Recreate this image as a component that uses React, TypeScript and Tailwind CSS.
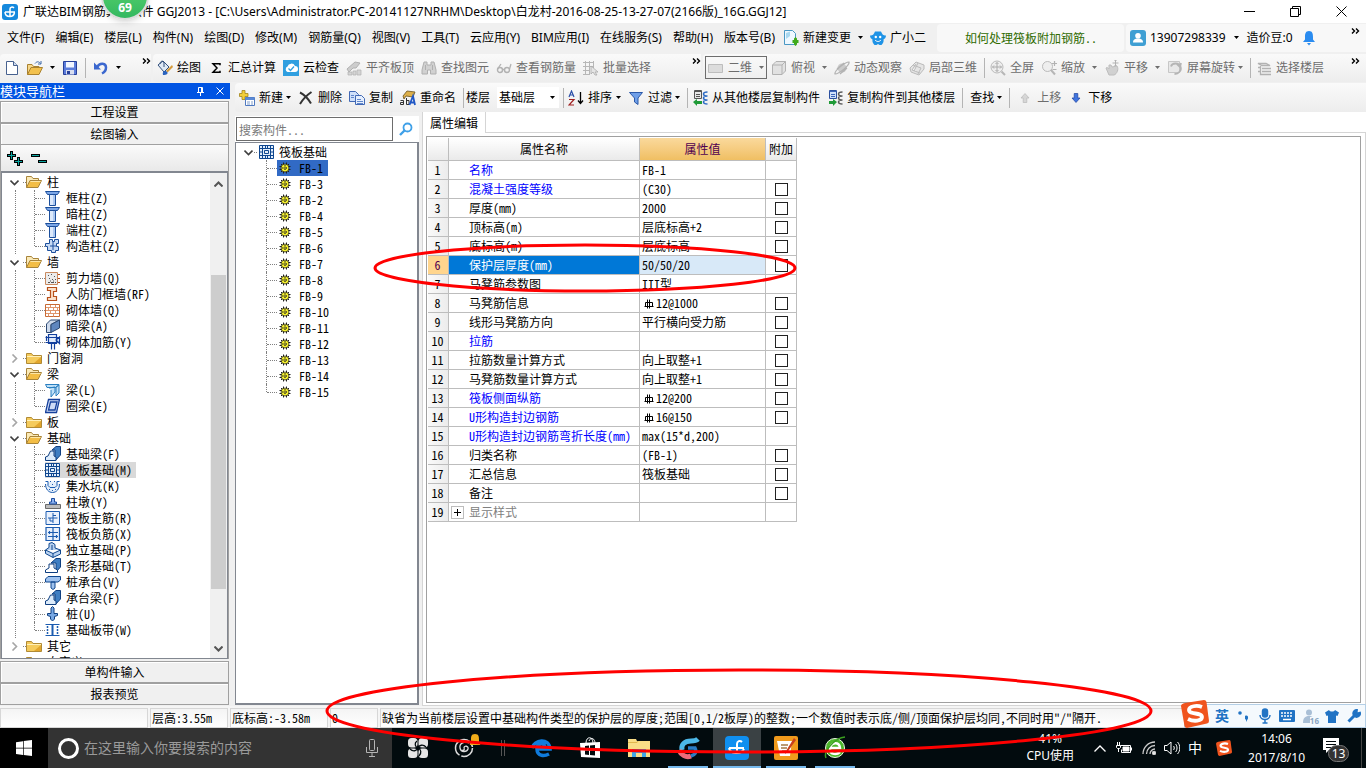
import React from "react";

const UI = "font-['Noto_Sans','Noto_Sans_CJK_SC',sans-serif]";
const SONG = "font-['Noto_Sans_Mono_CJK_SC','Noto_Sans_CJK_SC',monospace]";

type Kids = { children?: React.ReactNode };

function Ico({ children, dim = false, className = "size-4" }: Kids & { dim?: boolean; className?: string }) {
  return (
    <svg viewBox="0 0 16 16" className={`shrink-0 ${className} ${dim ? "opacity-80" : ""}`} fill="none" aria-hidden="true">
      {children}
    </svg>
  );
}

function Arrow({ dim = false }: { dim?: boolean }) {
  return (
    <svg viewBox="0 0 5 3" className="h-[3px] w-[5px] shrink-0" aria-hidden="true">
      <path d="M0 0h5L2.500 3z" fill={dim ? "#6d6d6d" : "#000"} />
    </svg>
  );
}

function More() {
  return (
    <svg viewBox="0 0 9 6" className="mt-1 h-1.5 w-[9px] shrink-0 self-start" fill="none" stroke="#000" strokeWidth="1.400" aria-hidden="true">
      <path d="M1 .5 3.500 3 1 5.500M5 .5 7.500 3 5 5.500" />
    </svg>
  );
}

function Sep() {
  return <span className="h-5 w-px shrink-0 bg-[#b4b4b4]" />;
}

/* ---------- toolbar drawings ---------- */
const I = {
  app: (
    <>
      <rect width="16" height="16" rx="3" fill="#1589dd" />
      <path d="M8 13V5c0-2 2.500-2.500 4-1M3 8h10M3 8c0 3 2 4.500 5 4.500 2 0 4-1.500 4.500-4" stroke="#fff" strokeWidth="1.500" />
    </>
  ),
  doc: (
    <>
      <path d="M2.500 1.500h7l4 4v9h-11z" fill="#fff" stroke="#47618f" />
      <path d="M9.500 1.500v4h4" fill="#cfdcf0" stroke="#47618f" />
    </>
  ),
  docPlus: (
    <>
      <path d="M1.500.5h8l3 3v11h-11z" fill="#eef8ff" stroke="#4a98c4" />
      <path d="M3 9V3l4-1.500V6z" fill="#a8d8f0" />
      <path d="M11 8.500 12.500 7 14 8.500V10h1.500v3H14v1.500L12.500 16 11 14.500V13H9.500v-3H11z" fill="#3faa1c" />
    </>
  ),
  open: (
    <>
      <path d="M.5 14.500v-10h4.500l1.500 2H12v2" fill="#f6d78a" stroke="#a9812f" />
      <path d="m.5 14.500 3.500-7h11.500l-3.500 7z" fill="#f2c14e" stroke="#a9812f" />
      <path d="M8 3.500c2-2.500 4-2 5.500 0M14 1v3h-3" stroke="#3d69a8" />
    </>
  ),
  save: (
    <>
      <path d="M1.500 1.500h13v13h-13z" fill="#5b7cdb" stroke="#27409a" />
      <path d="M4 2h8v5.500H4z" fill="#f2f6ff" />
      <path d="M4 10h8v4.500H4z" fill="#d8def0" />
      <path d="M5 11h3v3H5z" fill="#27409a" />
    </>
  ),
  undo: (
    <>
      <path d="M4 7c3-5 9-4 9 .5 0 3-2 5-4 6" stroke="#3c68cf" strokeWidth="2.500" />
      <path d="M1 2.500v7h7z" fill="#3c68cf" />
    </>
  ),
  paint: (
    <>
      <path d="m1 5 5-4 6 6-5 5z" fill="#dfe9f5" stroke="#33507c" />
      <path d="M3 4c0-3 3-4 4-1v4" stroke="#33507c" />
      <path d="m15 5-6 6 1.500 1.500L16 7z" fill="#d59a3a" />
      <path d="M6 15c-1-3 1-4.500 3-4l1.500 1.500C11 14 9 15.500 6 15z" fill="#2a63c0" />
    </>
  ),
  sigma: <path d="M12 5.200V3.700H5L9 8l-4 4.300h7v-1.500" stroke="#000" strokeWidth="1.500" />,
  cloud: (
    <>
      <rect width="16" height="16" fill="#2f9fe0" />
      <path d="M4.500 12a3 3 0 0 1 0-5.500 4 4 0 0 1 7.500-.5A3 3 0 0 1 12 12z" fill="#fff" />
      <path d="m5.500 8.500 2 2 3.500-4" stroke="#2f9fe0" strokeWidth="1.300" />
    </>
  ),
  align: (
    <>
      <path d="m1 9 8-7 5 1-4 5H7l-4 4z" fill="#c4c4c4" stroke="#a2a2a2" />
      <path d="M2 12h4v3H2zm5-1h3v4H7zm4-1h4v5h-4z" fill="#cfcfcf" stroke="#a0a0a0" strokeWidth=".7" />
    </>
  ),
  binoc: <path d="M3 2h3v3h4V2h3l2 8v4H9.500v-4h-3v4H1v-4zM4.500 5v5M11.500 5v5" fill="#c9c9c9" stroke="#a0a0a0" />,
  glasses: (
    <>
      <circle cx="4" cy="10" r="2.500" stroke="#a2a2a2" strokeWidth="1.400" />
      <circle cx="11" cy="10" r="2.500" stroke="#a2a2a2" strokeWidth="1.400" />
      <path d="M6 9.500h3M1.500 9 5 4M13.500 9l1.500-5" stroke="#a2a2a2" strokeWidth="1.300" />
    </>
  ),
  batch: (
    <>
      <path d="M0 2.500h11M0 6.500h11M0 10.500h7M0 14.500h7M2.500 1v14M6.500 1v14M10.500 1v7" stroke="#a8a8a8" />
      <path d="m8 6 7 6h-3l2 3h-2l-2-3-2 2z" fill="#e2e2e2" stroke="#9b9b9b" strokeWidth=".8" />
    </>
  ),
  plane: <path d="M.5 4.500h14v8H.5z" fill="#dcdcdc" stroke="#bdbdbd" />,
  cube: <path d="M1.500 5 5 1.500h9.500V11L11 14.500H1.500zM1.500 5H11v9.500M11 5l3.500-3.500" fill="#dedede" stroke="#a2a2a2" />,
  orbit: (
    <>
      <circle cx="8" cy="8" r="4.500" fill="#c2c2c2" />
      <path d="M1 14c-1-3 10-12 14-12 1 3-10 12-14 12zM3 9l7-6M6 14l7-6" stroke="#a2a2a2" strokeWidth="1.200" />
    </>
  ),
  local: <path d="m1 8 6-6 8 3v4l-5 6-8-3zM4 5l8 3-3 6M7 4l-4 6 8 3M9 3l-4 8" fill="#e2e2e2" stroke="#adadad" />,
  full: (
    <>
      <circle cx="7" cy="7" r="6" fill="#ededed" stroke="#adadad" />
      <path d="M7 2.500v9M2.500 7h9M5.500 4 7 2.500 8.500 4M5.500 10 7 11.500 8.500 10M4 5.500 2.500 7 4 8.500M10 5.500 11.500 7 10 8.500" stroke="#9a9a9a" />
      <path d="m11.500 11.500 3.500 3.500" stroke="#a8a8a8" strokeWidth="2" />
    </>
  ),
  zoom: (
    <>
      <circle cx="6.500" cy="6.500" r="5" fill="#ededed" stroke="#adadad" />
      <path d="m10 10 4 4.500" stroke="#a8a8a8" strokeWidth="2" />
      <path d="M13.500 1v5M11 3.500h5M11.500 9.500h4" stroke="#a2a2a2" strokeWidth="1.200" />
    </>
  ),
  pan: (
    <>
      <path d="M2 8c1-1 2 0 3 1V5h2l1 2 5-1c2 3 0 8-3 9H5z" fill="#c9c9c9" stroke="#b0b0b0" />
      <path d="M11.500 0v6M8.500 3h6M10.500 1l1-1 1 1M10.500 5l1 1 1-1" stroke="#a2a2a2" />
    </>
  ),
  rotate: (
    <>
      <path d="M1.500 1.500h11v11h-11z" fill="#e6e6e6" stroke="#bcbcbc" />
      <path d="M4 6.500c1-4 8-4 9.500 0 1.500 4-2 7.500-6 7.500M10 4l3 3 1-4" stroke="#a6a6a6" strokeWidth="1.800" />
    </>
  ),
  floors: <path d="M2 3.500h8l4 2H6zM6 8.500h9M6 11.500h9M6 14.500h9M4.500 6v8.500H6M2 7.500h2.500M2 11.500h2.500" stroke="#a2a2a2" strokeWidth="1.300" />,
  create: (
    <>
      <path d="M3 0.500h3v3h3v3H6v3H3v-3H.5v-3H3z" fill="#f3cf3b" stroke="#a2841a" strokeWidth=".8" />
      <path d="M6.500 7.500h9v8h-9z" fill="#fff" stroke="#4f79c0" />
      <path d="M6.500 7.500h9V10h-9z" fill="#5b8ad6" />
      <path d="M8 12h3M12 12h2M8 14h3M12 14h2" stroke="#7f9dcb" />
    </>
  ),
  del: <path d="M2 2.500c4 2 8 6 11 11M13.500 2C9 5 5 9 2 14" stroke="#333" strokeWidth="2" />,
  copy: (
    <>
      <path d="M.5 1.500h6l3 3v7h-9z" fill="#cfe0fa" stroke="#4169b5" />
      <path d="M6.500 5.500h6l3 3v6h-9z" fill="#e6effd" stroke="#4169b5" />
      <path d="M8 9.500h4M8 11.500h6M8 13.500h6M2 5.500h3M2 7.500h3" stroke="#5f86cb" />
    </>
  ),
  rename: (
    <>
      <path d="m3 6 4-5 8 1-2 5-7-1-2 3z" fill="#ddb04a" stroke="#6a5320" strokeWidth=".8" />
      <path d="M.5 10.500h3v4h-3v-2h3M6.500 8v6.500h2.500v-4H6.500" stroke="#333" />
      <path d="m9.500 15 3.500-9 2 9M10.500 12.500H15" stroke="#2258c5" strokeWidth="1.800" />
    </>
  ),
  sort: (
    <>
      <path d="m1 7 2.500-6L6 7M2 5h3" stroke="#2a4fa8" strokeWidth="1.200" />
      <path d="M1 9.500h5l-5 5.500h5" stroke="#a02020" strokeWidth="1.200" />
      <path d="M12.500 2v11M10 10.500l2.500 3 2.500-3" stroke="#000" strokeWidth="1.300" />
    </>
  ),
  filter: <path d="M1.500 2.500h13L10 8v6.500L6.500 12V8z" fill="#6f9fe8" stroke="#2b58a8" />,
  from: (
    <>
      <path d="M2.500.5h7v8h-7z" fill="#e8e8e8" stroke="#555" />
      <path d="M2.500 1.500h7M4 4.500h4M4 6.500h4" stroke="#555" />
      <path d="M15.500 2c-3 0-4 .5-4 2s1 2 4 2c-3 0-4 .5-4 2s1 2 4 2c-3 0-4 .5-4 2s1 2 4 2" stroke="#2f6cc4" strokeWidth="1.500" />
      <path d="m1 12 4-3v2h5v3H5v2z" fill="#1f9a37" />
    </>
  ),
  to: (
    <>
      <path d="M2.500.5h7v8h-7z" fill="#cfe0fa" stroke="#2b4f9e" />
      <path d="M2.500 1.500h7M4 4.500h4M4 6.500h4" stroke="#3b65b8" />
      <path d="M15.500 2c-3 0-4 .5-4 2s1 2 4 2c-3 0-4 .5-4 2s1 2 4 2c-3 0-4 .5-4 2s1 2 4 2" stroke="#5a5a5a" strokeWidth="1.500" />
      <path d="m10 12-4-3v2H2v3h4v2z" fill="#1f9a37" />
    </>
  ),
  up: <path d="M8 3.500 12 8H9.800v4.500H6.200V8H4z" fill="#d0d0d0" stroke="#ababab" strokeWidth=".7" />,
  down: <path d="M8 12.500 4 8h2.200V3.500h3.600V8H12z" fill="#3f74e0" stroke="#1c419c" strokeWidth=".7" />,
  owl: (
    <>
      <path d="M5 1.500h6l1 2c1 2 3 2 4 2 0 2-1 3-2.500 4 .5 2-.5 4-2 5.500h-2L8 14l-1.500 1h-2C3 13.500 2 11.500 2.500 9.500 1 8.500 0 7.500 0 5.500c1 0 3 0 4-2z" fill="#1f93e6" />
      <circle cx="5.800" cy="7" r="1.200" fill="#fff" />
      <circle cx="10.200" cy="7" r="1.200" fill="#fff" />
      <path d="M5 10c2 2 4 2 6 0" stroke="#fff" />
    </>
  ),
  user: (
    <>
      <rect width="16" height="16" rx="3" fill="#3f9fd3" />
      <circle cx="8" cy="5.800" r="2.800" fill="#fff" />
      <path d="M3 12.500c0-3 2-4 5-4s5 1 5 4z" fill="#fff" />
    </>
  ),
  bell: <path d="M8 1c3.500 0 4 3 4 6v2.500l2 2.500H2l2-2.500V7c0-3 .5-6 4-6zM6 13h4l-2 2.500z" fill="#2b8cf0" />,
};

/* ---------- component tree drawings ---------- */
const T: Record<string, React.ReactNode> = {
  folder: (
    <>
      <path d="M.5 13.500v-10h5l1.500 2h8.500v8z" fill="#f5cb5c" stroke="#b08a35" />
      <path d="M1 6.500h14" stroke="#fff0b8" />
      <path d="M8 13l7-6v6z" fill="#e2a62c" />
    </>
  ),
  folderOpen: (
    <>
      <path d="M.5 13.500v-11h5l1.500 2h5.500v3" fill="#fbeab8" stroke="#a8843a" />
      <path d="m.5 13.500 3.500-7h11.500l-3.500 7z" fill="#f3bd45" stroke="#a8843a" />
      <path d="M4.500 7.500h10" stroke="#fde6a6" />
    </>
  ),
  column: (
    <>
      <path d="M.5 1.500h14l-2 3h-10z" fill="#7ba6e6" stroke="#1c4f9c" />
      <path d="M4.500 4.500h6v11h-6z" fill="#dce9fb" stroke="#1c4f9c" />
      <path d="M9 5v10" stroke="#7ba6e6" />
    </>
  ),
  gearcol: <path d="M4.500 1.500h3v2h2v-2h4v4h-2v3h2v4h-3v2h-4v-2h-4v-4h-2v-3h4zM8 4v8M5 8h6" fill="#c8dbf5" stroke="#1c4f9c" />,
  wall: (
    <>
      <path d="M.5 2.500h12v12H.5z" fill="#ececec" stroke="#c98a60" />
      <path d="M3 5.500h1M6 4.500h1M9 6.500h1M4 8.500h1M7 9.500h1M10 9.500h1M3 12.500h2M6 12.500h3M10 12.500h1M5 11h1M8 11h1" stroke="#555" />
      <path d="M13 4.500h2M13 8.500h2M13 12.500h2" stroke="#b8501a" />
    </>
  ),
  rf: <path d="M2.500 1.500h9v4h-3v5h3v4h-9v-3h3v-7h-3z" fill="#fbe2cc" stroke="#b8501a" strokeWidth="1.200" />,
  brick: (
    <>
      <path d="M.5 2.500h14v12H.5z" fill="#fff" stroke="#c86a34" />
      <path d="M1 5.500h13M1 8.500h13M1 11.500h13M5.500 3v2.500M10.500 3v2.500M3.500 5.500v3M8.500 5.500v3M12.500 5.500v3M5.500 8.500v3M10.500 8.500v3M3.500 11.500v3M8.500 11.500v3" stroke="#e0966c" />
    </>
  ),
  beam: (
    <>
      <path d="m1.500 6 4-4h9L6 6.500v8H1.500z" fill="#cfdbec" stroke="#2c4872" />
      <path d="m6 6.500 8.500-4.500v8L6 14.500z" fill="#5e86bf" stroke="#2c4872" />
    </>
  ),
  mesh: <path d="M3.500.5h8v9h-8zM.5 3.500H15M.5 8.500h12M1.500 2v5M6.500 9v6.500M9.500 9v6.500M11 6l3.500-3v6.500z" fill="#dfeafb" stroke="#123f9e" strokeWidth="1.200" />,
  beamL: <path d="M.5 2.500h13.500l-3 3h-9zM4 6l6-1v5l-4 5V8M11 5l3-2v8l-3 3z" fill="#bfe0f7" stroke="#2a7fc0" />,
  ring: <path d="M3.500 1.500h11l-3 13H.5zM5.500 4H12l-2 8H3.500z" fill="#cfdcf6" stroke="#17419c" strokeWidth="1.300" />,
  fbeam: (
    <>
      <path d="m7 4 4-3.500h4.500V9L10 15V4z" fill="#3f7ec2" stroke="#0f3f80" />
      <path d="M.5 14.500V11L3 10l2.500-5H9v5l2 1v3.500z" fill="#dcebfa" stroke="#0f3f80" />
    </>
  ),
  raft: (
    <>
      <path d="M0 1h15v14H0z" fill="#e4effb" />
      <path d="M.5 1.500h14v13H.5zM.5 4.500h14M.5 11.500h14M3.500 1.500v13M11.500 1.500v13M6.500 1.500v3M8.500 1.500v3M6.500 11.500v3M8.500 11.500v3M.5 8h3M11.500 8h3M5.500 6.500h4v3h-4z" stroke="#0f478f" />
    </>
  ),
  pit: (
    <>
      <path d="M.5 3.500H3v4l2 2h5l2-2v-4h2.500M.5 6c0 5 3 8.500 7 8.500s7-3.500 7-8.500" fill="#e4effb" stroke="#1c5cb0" />
      <path d="M4 11.500h1M7 12.500h1M10 11.500h1M5 3.500h1M9 3.500h1M7 6.500h1" stroke="#1c5cb0" />
    </>
  ),
  pier: (
    <>
      <path d="M.5 10.500h15v4H.5z" fill="#bcbcbc" stroke="#6a6a6a" />
      <path d="M4.500 10V8h2V4.500h3V8h2v2z" fill="#8ab0ee" stroke="#1d4ca0" />
    </>
  ),
  r1: <path d="M1 1.500h13.500v13H1zM8 3v10M3 8h9.500M8 5.500h3M5 8v3M5 11h3" fill="#e9f1fd" stroke="#1c5cb0" />,
  r2: <path d="M1 1.500h13.500v13H1zM8 2v12M3 6.500h10M3 10.500h10M4.500 5v3M11.500 9v3" fill="#e9f1fd" stroke="#1c5cb0" strokeWidth="1.200" />,
  indep: <path d="M.5 8 4 5.500V1.500l3-1 3 2v3.500l5.500 2v4L8 15.500.5 11.500zM.5 8 8 11.500l7.500-3.500M8 11.500v4M7 3v5" fill="#b9d2f0" stroke="#0f478f" />,
  strip: (
    <>
      <path d="m6 5 5-4.500h4.500V9L11 14V5z" fill="#3f7ec2" stroke="#0f3f80" />
      <path d="M.5 14.500V12L4 10V6h5v4l3.500 2v2.500z" fill="#fff" stroke="#0f3f80" />
    </>
  ),
  cap: <path d="M.5 5 3 2.500h12.500V6L13 8H.5zM6 8h4v6l-2 1.500L6 14z" fill="#9fc2ee" stroke="#0f478f" />,
  pile: <path d="M6 2l1.500-1.500L9 2v5.500h3.500v2l-3 1V13l-2 2-2-2v-2.500l-3-1v-2H6z" fill="#78a8e4" stroke="#0f3f80" />,
  band: (
    <>
      <path d="M.5 2.500h14M.5 13.500h14" stroke="#1c5cb0" />
      <path d="M7.500 3v10" stroke="#1c5cb0" strokeWidth="2" />
      <path d="M2.500 4v9M12.500 4v9" stroke="#1c5cb0" strokeWidth="1.500" strokeDasharray="2 1" />
    </>
  ),
};

type Node = { name: string; icon?: string; open?: boolean; items?: [string, string][] };
const TREE: Node[] = [
  { name: "柱", open: true, items: [["column", "框柱(Z)"], ["column", "暗柱(Z)"], ["column", "端柱(Z)"], ["gearcol", "构造柱(Z)"]] },
  { name: "墙", open: true, items: [["wall", "剪力墙(Q)"], ["rf", "人防门框墙(RF)"], ["brick", "砌体墙(Q)"], ["beam", "暗梁(A)"], ["mesh", "砌体加筋(Y)"]] },
  { name: "门窗洞" },
  { name: "梁", open: true, items: [["beamL", "梁(L)"], ["ring", "圈梁(E)"]] },
  { name: "板" },
  {
    name: "基础",
    open: true,
    items: [
      ["fbeam", "基础梁(F)"], ["raft", "筏板基础(M)"], ["pit", "集水坑(K)"], ["pier", "柱墩(Y)"], ["r1", "筏板主筋(R)"], ["r2", "筏板负筋(X)"],
      ["indep", "独立基础(P)"], ["strip", "条形基础(T)"], ["cap", "桩承台(V)"], ["fbeam", "承台梁(F)"], ["pile", "桩(U)"], ["band", "基础板带(W)"],
    ],
  },
  { name: "其它" },
  { name: "自定义" },
];

const MENUS = [
  "文件(F)", "编辑(E)", "楼层(L)", "构件(N)", "绘图(D)", "修改(M)", "钢筋量(Q)", "视图(V)", "工具(T)", "云应用(Y)",
  "BIM应用(I)", "在线服务(S)", "帮助(H)", "版本号(B)",
];

const PARTS = [1, 3, 2, 4, 5, 6, 7, 8, 9, 10, 11, 12, 13, 14, 15];

type Row = { name: string; value: string; check: boolean; blue?: boolean; rebar?: boolean };
const ROWS: Row[] = [
  { name: "名称", value: "FB-1", check: false, blue: true },
  { name: "混凝土强度等级", value: "(C30)", check: true, blue: true },
  { name: "厚度(mm)", value: "2000", check: true },
  { name: "顶标高(m)", value: "层底标高+2", check: true },
  { name: "底标高(m)", value: "层底标高", check: true },
  { name: "保护层厚度(mm)", value: "50/50/20", check: true },
  { name: "马凳筋参数图", value: "III型", check: false },
  { name: "马凳筋信息", value: "12@1000", check: true, rebar: true },
  { name: "线形马凳筋方向", value: "平行横向受力筋", check: true },
  { name: "拉筋", value: "", check: true, blue: true },
  { name: "拉筋数量计算方式", value: "向上取整+1", check: true },
  { name: "马凳筋数量计算方式", value: "向上取整+1", check: true },
  { name: "筏板侧面纵筋", value: "12@200", check: true, blue: true, rebar: true },
  { name: "U形构造封边钢筋", value: "16@150", check: true, blue: true, rebar: true },
  { name: "U形构造封边钢筋弯折长度(mm)", value: "max(15*d,200)", check: false, blue: true },
  { name: "归类名称", value: "(FB-1)", check: true },
  { name: "汇总信息", value: "筏板基础", check: true },
  { name: "备注", value: "", check: true },
  { name: "显示样式", value: "", check: false },
];

function Tool({ icon, label, dim = false }: { icon?: React.ReactNode; label: string; dim?: boolean }) {
  return (
    <button type="button" className={`flex shrink-0 items-center gap-1 whitespace-nowrap ${dim ? "text-[#6d6d6d]" : "text-black"}`}>
      {icon && <Ico dim={dim}>{icon}</Ico>}
      {label}
    </button>
  );
}

function IconButton({ icon, label }: { icon: React.ReactNode; label: string }) {
  return (
    <button type="button" aria-label={label} className="shrink-0">
      <Ico>{icon}</Ico>
    </button>
  );
}

function TitleBar() {
  return (
    <header className="relative flex h-[23px] shrink-0 items-center bg-white">
      <Ico className="ml-0.5 size-4">{I.app}</Ico>
      <h1 className="ml-[5px] flex-1 whitespace-nowrap text-xs">
        广联达BIM钢筋算量软件 GGJ2013 - [C:\Users\Administrator.PC-20141127NRHM\Desktop\白龙村-2016-08-25-13-27-07(2166版)_16G.GGJ12]
      </h1>
      <div className="flex gap-[35px] pr-[19px]">
        <button type="button" aria-label="最小化">
          <svg viewBox="0 0 11 11" className="size-[11px]" stroke="#000"><path d="M0 5.500h11" /></svg>
        </button>
        <button type="button" aria-label="还原">
          <svg viewBox="0 0 11 11" className="size-[11px]" stroke="#000" fill="none"><path d="M.5 2.500h8v8h-8zM2.500 2.500v-2h8v8h-2" /></svg>
        </button>
        <button type="button" aria-label="关闭">
          <svg viewBox="0 0 11 11" className="size-[11px]" stroke="#000"><path d="m.5.5 10 10M10.500.5l-10 10" /></svg>
        </button>
      </div>
      <div className="absolute -top-7 left-[101px] flex size-12 items-end justify-center rounded-full border-2 border-[#dcdcdc] bg-linear-to-b from-[#5fd86f] to-[#33b860] pb-0.5 font-['Noto_Sans',sans-serif] text-xs leading-4 font-bold text-white shadow-md">
        69
      </div>
    </header>
  );
}

function MenuBar() {
  return (
    <nav className="flex h-[29px] shrink-0 items-center text-xs">
      <ul className="flex items-center gap-[11px] pl-[7px]">
        {MENUS.map((m) => (
          <li key={m} className="whitespace-nowrap"><button type="button">{m}</button></li>
        ))}
      </ul>
      <div className="ml-2 flex items-center gap-[7px]">
        <Tool icon={I.docPlus} label="新建变更" />
        <Arrow />
        <Tool icon={I.owl} label="广小二" />
      </div>
      <div className="ml-auto flex h-7 w-[187px] shrink-0 items-center rounded bg-[#f8f8f8] pl-7">
        <a href="#tips" className={`${SONG} whitespace-nowrap text-[#2f6b00]`}>如何处理筏板附加钢筋..</a>
      </div>
      <div className="ml-0.5 flex h-7 w-60 shrink-0 items-center gap-2 rounded-l bg-[#f8f8f8] pr-1.5 pl-1">
        <Tool icon={I.user} label="13907298339" />
        <Arrow />
        <Tool label="造价豆:0" />
        <IconButton icon={I.bell} label="消息" />
        <span className="flex-1" />
        <More />
      </div>
    </nav>
  );
}

function MainToolbar() {
  const bar = "flex h-7 items-center rounded-l bg-linear-to-b from-[#fafafa] to-[#ededed] text-xs";
  return (
    <div className="flex h-[31px] shrink-0 items-center">
      <div className={`${bar} w-[151px] shrink-0 gap-[7px] pl-1`}>
        <IconButton icon={I.doc} label="新建" />
        <IconButton icon={I.open} label="打开" />
        <Arrow />
        <IconButton icon={I.save} label="保存" />
        <Sep />
        <IconButton icon={I.undo} label="撤销" />
        <Arrow />
        <span className="flex-1" />
        <More />
      </div>
      <div className={`${bar} ml-0.5 w-[548px] shrink-0 gap-[7px] pl-1`}>
        <Tool icon={I.paint} label="绘图" />
        <Tool icon={I.sigma} label="汇总计算" />
        <Tool icon={I.cloud} label="云检查" />
        <Tool dim icon={I.align} label="平齐板顶" />
        <Tool dim icon={I.binoc} label="查找图元" />
        <Tool dim icon={I.glasses} label="查看钢筋量" />
        <Tool dim icon={I.batch} label="批量选择" />
        <span className="flex-1" />
        <More />
      </div>
      <div className={`${bar} ml-0.5 min-w-0 flex-1 gap-[7px] pr-1.5 pl-0.5`}>
        <div className="-mr-[3px] flex h-[23px] w-[62px] shrink-0 items-center gap-1 border border-[#6d6d6d] px-0.5">
          <Ico>{I.plane}</Ico>
          <select aria-label="视图方式" className="min-w-0 flex-1 appearance-none text-[#6d6d6d]"><option>二维</option></select>
          <Arrow dim />
        </div>
        <Tool dim icon={I.cube} label="俯视" />
        <Arrow dim />
        <Tool dim icon={I.orbit} label="动态观察" />
        <Tool dim icon={I.local} label="局部三维" />
        <div className="flex items-center gap-[5px]"><Sep /><Tool dim icon={I.full} label="全屏" /></div>
        <Tool dim icon={I.zoom} label="缩放" />
        <Arrow dim />
        <Tool dim icon={I.pan} label="平移" />
        <Arrow dim />
        <div className="flex items-center gap-[3px]"><Tool dim icon={I.rotate} label="屏幕旋转" /><Arrow dim /></div>
        <div className="flex items-center gap-[5px]"><Sep /><Tool dim icon={I.floors} label="选择楼层" /></div>
        <span className="flex-1" />
        <More />
      </div>
    </div>
  );
}

function NavButton({ label }: { label: string }) {
  return (
    <button type="button" className="h-[22px] shrink-0 border border-[#a0a0a0] bg-[#f0f0f0] text-center text-xs leading-5 shadow-[inset_1px_1px_0_#fff]">
      {label}
    </button>
  );
}

function Chevron({ open = false }: { open?: boolean }) {
  return (
    <svg viewBox="0 0 9 9" className="size-[9px] shrink-0" fill="none" strokeWidth="1.600" stroke={open ? "#404040" : "#a6a6a6"} aria-hidden="true">
      <path d={open ? "m.5 2.500 4 4 4-4" : "m2.500.5 4 4-4 4"} />
    </svg>
  );
}

function Branch({ last }: { last: boolean }) {
  return (
    <>
      <span className={`w-px self-start border-l border-dotted border-[#808080] ${last ? "h-2" : "h-4"}`} />
      <span className="w-2.5 border-t border-dotted border-[#808080]" />
    </>
  );
}

function NavPanel() {
  return (
    <aside className={`${SONG} flex w-[230px] shrink-0 flex-col text-xs`}>
      <div className="flex h-4 shrink-0 items-center bg-[#0054e3] text-white">
        <h2 className="flex-1 text-[13px] leading-4">模块导航栏</h2>
        <button type="button" aria-label="固定" className="mr-3">
          <svg viewBox="0 0 7 9" className="h-[9px] w-[7px]" fill="none" stroke="#fff"><path d="M1.500 5V.5h4V5M0 5.500h7M3.500 5.500V9M4.500.5V5" /></svg>
        </button>
        <button type="button" aria-label="关闭" className="mr-1.5">
          <svg viewBox="0 0 8 8" className="size-2" stroke="#fff"><path d="m.5.5 7 7M7.500.5l-7 7" /></svg>
        </button>
      </div>
      <div className="flex min-h-0 w-[229px] flex-1 flex-col pt-0.5">
        <NavButton label="工程设置" />
        <NavButton label="绘图输入" />
        <div className="flex min-h-0 flex-1 flex-col border-x border-[#a0a0a0]">
          <div className="flex h-[26px] shrink-0 items-center gap-2 bg-linear-to-b from-[#fafafa] to-[#e9e9e9] pl-1.5">
            <button type="button" aria-label="全部展开">
              <svg viewBox="0 0 16 15" className="h-[15px] w-4" fill="none"><path d="M4.500 0v9M0 4.500h9M11.500 6v9M7 10.500h9" stroke="#000" strokeWidth="3" /><path d="M4.500 1v7M1 4.500h7M11.500 7v7M8 10.500h7" stroke="#0aa5a0" /></svg>
            </button>
            <button type="button" aria-label="全部折叠">
              <svg viewBox="0 0 16 15" className="h-[15px] w-4" fill="none"><path d="M0 4.500h9M7 10.500h9" stroke="#000" strokeWidth="3" /><path d="M1 4.500h7M8 10.500h7" stroke="#0aa5a0" /></svg>
            </button>
          </div>
          <div className="flex min-h-0 flex-1 border border-t-2 border-[#828790] bg-white">
            <ul className="min-w-0 flex-1 overflow-hidden pt-px pl-2 leading-4">
              {TREE.map((n) => (
                <li key={n.name}>
                  <div className="flex h-4 items-center">
                    <Chevron open={n.open} />
                    <span className="ml-1 w-[3px] border-t border-dotted border-[#808080]" />
                    <Ico>{n.open ? T.folderOpen : T.folder}</Ico>
                    <span className="ml-[5px]">{n.name}</span>
                  </div>
                  {n.items && (
                    <ul className="ml-[5px] border-l border-dotted border-[#808080]">
                      {n.items.map(([icon, label], i) => (
                        <li key={label} className="flex h-4 items-center pl-[18px]">
                          <Branch last={i === n.items!.length - 1} />
                          <span className={`flex h-4 items-center gap-[5px] pr-1 ${icon === "raft" ? "bg-[#d9d9d9]" : ""}`}>
                            <Ico>{T[icon]}</Ico>
                            {label}
                          </span>
                        </li>
                      ))}
                    </ul>
                  )}
                </li>
              ))}
            </ul>
            <div className="flex w-[17px] shrink-0 flex-col items-center bg-[#f0f0f0]">
              <svg viewBox="0 0 9 6" className="mt-2 h-1.5 w-[9px]" fill="none" stroke="#555" strokeWidth="2"><path d="m.5 5.500 4-4 4 4" /></svg>
              <span className="mt-[88px] h-[314px] w-[15px] bg-[#cdcdcd]" />
              <span className="flex-1" />
              <svg viewBox="0 0 9 6" className="mb-1.5 h-1.5 w-[9px]" fill="none" stroke="#555" strokeWidth="2"><path d="m.5.5 4 4 4-4" /></svg>
            </div>
          </div>
        </div>
        <span className="h-0.5 shrink-0" />
        <NavButton label="单构件输入" />
        <NavButton label="报表预览" />
        <span className="h-px shrink-0" />
      </div>
    </aside>
  );
}

function EditToolbar() {
  return (
    <div className="flex h-[29px] shrink-0 items-center gap-[7px] rounded-l bg-linear-to-b from-[#fafafa] to-[#ededed] pl-1 text-xs">
      <div className="flex items-center gap-[3px]"><Tool icon={I.create} label="新建" /><Arrow /></div>
      <Tool icon={I.del} label="删除" />
      <Tool icon={I.copy} label="复制" />
      <Tool icon={I.rename} label="重命名" />
      <div className="flex items-center gap-0.5"><Sep /><label htmlFor="floor">楼层</label></div>
      <div className="-mr-[3px] flex h-[21px] w-[62px] shrink-0 items-center bg-white px-0.5 pr-1">
        <select id="floor" className="min-w-0 flex-1 appearance-none"><option>基础层</option></select>
        <Arrow />
      </div>
      <div className="flex items-center gap-1"><Sep /><Tool icon={I.sort} label="排序" /><Arrow /></div>
      <div className="flex items-center gap-[3px]"><Tool icon={I.filter} label="过滤" /><Arrow /></div>
      <div className="flex items-center gap-1"><Sep /><Tool icon={I.from} label="从其他楼层复制构件" /></div>
      <Tool icon={I.to} label="复制构件到其他楼层" />
      <Sep />
      <div className="flex items-center gap-[3px]"><Tool label="查找" /><Arrow /></div>
      <Sep />
      <Tool dim icon={I.up} label="上移" />
      <Tool icon={I.down} label="下移" />
    </div>
  );
}

function PartList() {
  return (
    <section className={`${SONG} flex w-[184px] shrink-0 flex-col pb-px text-xs`}>
      <div className="flex h-[26px] shrink-0 items-center bg-white">
        <input aria-label="搜索构件" placeholder="搜索构件..." className="ml-px h-6 w-[157px] border border-[#6d6d6d] px-0.5 placeholder:text-[#7a7a7a]" />
        <button type="button" aria-label="搜索" className="ml-1.5">
          <svg viewBox="0 0 14 14" className="size-3.5" fill="none"><circle cx="8.500" cy="5.500" r="4" stroke="#3fa0e8" strokeWidth="1.800" /><path d="m5.500 8.500-4.500 4.500" stroke="#3fa0e8" strokeWidth="2.400" /></svg>
        </button>
      </div>
      <div className="flex-1 border-2 border-t border-l border-[#828790] bg-white pt-px pl-2 leading-4">
        <div className="flex h-4 items-center">
          <Chevron open />
          <span className="mx-px w-[3px] border-t border-dotted border-[#808080]" />
          <Ico className="ml-px size-4">{T.raft}</Ico>
          <span className="ml-1">筏板基础</span>
        </div>
        <ul>
          {PARTS.map((n, i) => (
            <li key={n} className="flex h-4 items-center pl-[22px]">
              <Branch last={i === PARTS.length - 1} />
              <span className={`flex h-4 items-center pr-[5px] pl-0.5 ${i === 0 ? "bg-[#316ac5]" : ""}`}>
                <svg viewBox="0 0 12 12" className="size-3" fill="none" aria-hidden="true">
                  <path d="M4.500.5v11M7.500.5v11M.5 4.500h11M.5 7.500h11M2 2l8 8M10 2l-8 8" stroke="#222" />
                  <circle cx="6" cy="6" r="4" fill="#f4ef2c" stroke="#222" strokeWidth=".8" />
                  <path d="M6 3v6M3 6h6" stroke="#222" strokeDasharray="1 1" />
                  <circle cx="6" cy="6" r="1.200" fill="#f4ef2c" stroke="#222" strokeWidth=".7" />
                </svg>
                <span className="ml-2">FB-{n}</span>
              </span>
            </li>
          ))}
        </ul>
      </div>
    </section>
  );
}

function Rebar() {
  return (
    <svg viewBox="0 0 10 10" className="mr-0.5 ml-0.5 inline size-2.5 align-[-1px]" fill="none" stroke="#000" aria-hidden="true">
      <path d="M1.500 3.500h7v4h-7zM3.500.5v9M5.500.5v9M.5 7.500h9" />
    </svg>
  );
}

function PropertyTable() {
  const head = "h-[23px] border-r border-b border-[#bdbdbd] p-0 text-center font-normal";
  const cell = "h-[19px] border-r border-b border-[#bdbdbd] p-0";
  return (
    <table className="table-fixed border-separate border-spacing-0 text-xs leading-4">
      <colgroup><col className="w-[21px]" /><col className="w-[191px]" /><col className="w-[126px]" /><col className="w-[31px]" /></colgroup>
      <thead className="bg-linear-to-b from-white to-[#e9e9e9]">
        <tr>
          <th className={head} aria-label="序号" />
          <th className={head}>属性名称</th>
          <th className={`${head} bg-linear-to-b from-[#fad99c] to-[#f0bf62] text-[#500050]`}>属性值</th>
          <th className={head}>附加</th>
        </tr>
      </thead>
      <tbody>
        {ROWS.map((r, i) => {
          const on = i === 5;
          const last = i === ROWS.length - 1;
          const tone = on ? "bg-[#0078d7] text-white" : r.blue ? "text-[#0000ff]" : last ? "text-[#808080]" : "";
          return (
            <tr key={r.name}>
              <td className={`${cell} pr-px text-center ${on ? "bg-[#ffd58d] text-[#500050]" : "bg-linear-to-r from-[#fafafa] to-[#ececec]"}`}>{i + 1}</td>
              <td className={`${cell} whitespace-nowrap ${tone}`}>
                <div className="flex items-center pl-0.5">
                  <span className="w-[18px] shrink-0">
                    {last && (
                      <button type="button" aria-label="展开" className="flex size-[13px] items-center justify-center border border-[#bdbdbd]">
                        <svg viewBox="0 0 7 7" className="size-[7px]" stroke="#000"><path d="M3.500 0v7M0 3.500h7" /></svg>
                      </button>
                    )}
                  </span>
                  {r.name}
                </div>
              </td>
              <td className={`${cell} whitespace-nowrap pl-0.5 ${on ? "bg-[#d8e9f8]" : ""}`}>{r.rebar && <Rebar />}{r.value}</td>
              <td className={cell}>
                {r.check && <input type="checkbox" aria-label={r.name} className="mx-auto block size-[13px] appearance-none border border-[#222] bg-white checked:bg-[#222]" />}
              </td>
            </tr>
          );
        })}
      </tbody>
    </table>
  );
}

function PropertyPane() {
  return (
    <section className={`${SONG} ml-[3px] flex min-w-0 flex-1 flex-col text-xs`}>
      <div role="tablist" className="flex h-[21px] shrink-0 bg-white">
        <button type="button" role="tab" aria-selected="true" className="w-16 border-r border-l border-[#d5d5d5] text-center leading-5">属性编辑</button>
        <span className="flex-1 border-b border-[#d5d5d5]" />
      </div>
      <div className="flex min-h-0 flex-1 border-x border-b border-[#d5d5d5] bg-white pt-[3px] pr-1 pb-0.5 pl-[3px]">
        <div className="flex-1 border border-[#a0a0a0] pt-px pl-px">
          <PropertyTable />
        </div>
      </div>
    </section>
  );
}

function StatusBar() {
  const cell = "h-5 shrink-0 border border-[#d7d7d7] bg-linear-to-b from-[#f4f4f4] to-white pl-px leading-[18px] whitespace-nowrap";
  return (
    <footer className={`${SONG} flex h-[22px] shrink-0 items-center gap-0.5 bg-[#f5f5f5] pt-0.5 text-xs`}>
      <span className={`${cell} w-[148px]`} />
      <span className={`${cell} w-[78px]`}>层高:3.55m</span>
      <span className={`${cell} w-[98px]`}>底标高:-3.58m</span>
      <span className={`${cell} w-12`}>0</span>
      <span className={`${cell} min-w-0 flex-1`}>
        缺省为当前楼层设置中基础构件类型的保护层的厚度;范围[0,1/2板厚)的整数;一个数值时表示底/侧/顶面保护层均同,不同时用"/"隔开.
      </span>
    </footer>
  );
}

function SogouMark({ className }: { className: string }) {
  return (
    <svg viewBox="0 0 28 28" className={className} aria-hidden="true">
      <path d="M4 3 23 0q2 0 2.500 2l2.500 19q0 2-2 2.500L6 28q-2 0-2.500-2L0 6q0-2 4-3z" fill="#f0541e" />
      <path d="M21 7c-5-2-13-1-13 3 0 5 13 2 13 7 0 4-8 5-14 2" fill="none" stroke="#fff" strokeWidth="3.800" />
    </svg>
  );
}

function ImeBar() {
  return (
    <div className={`${UI} absolute right-0 bottom-10 flex h-6 items-center border border-[#b4cfe6] bg-[#f4f9fd] pr-1 text-[#2173c4]`}>
      <SogouMark className="-mt-1 -ml-1 size-7" />
      <span className="ml-1.5 text-sm leading-5 font-bold">英</span>
      <svg viewBox="0 0 12 12" className="ml-2 size-3" fill="#2173c4"><circle cx="3" cy="3" r="1.800" /><path d="M8 6c2-1 3.500 0 3 2.500L9 12c0-2 .5-2-1-3z" /></svg>
      <svg viewBox="0 0 12 16" className="ml-2.5 h-4 w-3" fill="none" stroke="#2173c4" strokeWidth="1.500"><rect x="3.500" y="1" width="5" height="8" rx="2.500" fill="#2173c4" /><path d="M1 7c0 6 10 6 10 0M6 12v3M3.500 15h5" /></svg>
      <svg viewBox="0 0 16 12" className="ml-2 h-3 w-4"><rect width="16" height="12" rx="1" fill="#2173c4" /><path d="M2 3h12M2 6h12" stroke="#fff" strokeWidth="1.600" strokeDasharray="2 1" /><path d="M4 9.500h8" stroke="#fff" strokeWidth="1.500" /></svg>
      <span className="relative ml-2 flex h-4 w-4 items-center">
        <svg viewBox="0 0 12 14" className="h-3.5 w-3" fill="#a9bfd6"><circle cx="6" cy="3.500" r="3" /><path d="M0 14c0-5 2-7 6-7s6 2 6 7z" /></svg>
        <span className="absolute right-0 bottom-0 bg-[#f4f9fd] text-[8px] leading-[7px] font-bold text-[#8aa5c2]">16</span>
      </span>
      <svg viewBox="0 0 14 13" className="ml-1.5 h-[13px] w-3.5" fill="#2173c4"><path d="M4 0c1 2 5 2 6 0l4 2.500-1.500 3.500L11 5.500V13H3V5.500L1.500 6 0 2.500z" /></svg>
      <svg viewBox="0 0 14 14" className="ml-2 size-3.5" fill="none" stroke="#2173c4"><path d="m1.500 12.500 6-6" strokeWidth="3" /><path d="M13 3.500a3.500 3.500 0 1 1-3-2.500L9.500 4.500z" strokeWidth="1.800" fill="#2173c4" /></svg>
    </div>
  );
}

function Task({ children, active = false, run = false, label }: Kids & { active?: boolean; run?: boolean; label: string }) {
  return (
    <button type="button" aria-label={label} className={`relative flex h-10 w-12 items-center justify-center ${active ? "bg-[#3a4144]" : ""}`}>
      {children}
      {run && <span className={`absolute bottom-0 h-0.5 bg-[#76b9ed] ${active ? "w-12" : "w-10"}`} />}
    </button>
  );
}

function Taskbar() {
  return (
    <div className={`${UI} flex h-10 shrink-0 items-center bg-[#020b0e] text-xs text-white`}>
      <button type="button" aria-label="开始" className="flex h-10 w-12 items-center justify-center bg-black">
        <svg viewBox="0 0 16 16" className="size-4" fill="#fff"><path d="M0 2.200 7 1.200v6.500H0zM7.700 1.100 16 0v7.700H7.700zM0 8.400h7v6.500l-7-1zM7.700 8.400H16V16l-8.300-1.100z" /></svg>
      </button>
      <div className="flex h-10 w-[344px] items-center bg-[#333] pl-2.5">
        <span className="size-[21px] rounded-full border-[3px] border-white" />
        <input aria-label="搜索" placeholder="在这里输入你要搜索的内容" className="ml-[5px] min-w-0 flex-1 text-sm placeholder:text-[#9a9a9a]" />
        <svg viewBox="0 0 12 18" className="mr-3.5 h-[18px] w-3" fill="none" stroke="#b5b5b5"><rect x="3.500" y=".5" width="5" height="11" rx="1" /><path d="M.5 8v5.500h11V8M6 13.500v4M3 17.500h6" /></svg>
      </div>
      <div className="ml-0.5 flex gap-px">
        <Task label="风扇">
          <svg viewBox="0 0 22 22" className="size-[22px]">
            <rect x="1" y="1" width="9.500" height="9.500" rx="3.500" fill="#e6e6e6" />
            <rect x="11.500" y="1" width="9.500" height="9.500" rx="3.500" fill="#e6e6e6" />
            <rect x="1" y="11.500" width="9.500" height="9.500" rx="3.500" fill="#e6e6e6" />
            <rect x="11.500" y="11.500" width="9.500" height="9.500" rx="3.500" fill="#e6e6e6" />
            <path d="M11 11C8 10 7 6 10 4M11 11c1-3 5-4 8-1M11 11c3 1 4 5 1 8M11 11c-1 3-5 4-8 1" fill="none" stroke="#020b0e" strokeWidth="1.300" />
          </svg>
        </Task>
        <Task label="提醒">
          <svg viewBox="0 0 28 26" className="-mt-1 h-[26px] w-7" fill="none">
            <circle cx="11" cy="15" r="8.500" stroke="#ddd" strokeWidth="1.500" strokeDasharray="16 2" />
            <path d="M11 15c0-3 5-2 4 1s-7 4-8-1 5-7 9-5M11 15c1 2-1 3-2 2" stroke="#ddd" strokeWidth="1.300" />
            <path d="M22 1c4 0 4 3 4 6v3l1.500 2h-11l1.500-2V7c0-3 0-6 4-6z" fill="#f0ad1a" />
          </svg>
        </Task>
      </div>
      <span className="ml-2.5 h-4 w-1 border-x border-[#555]" />
      <div className="ml-3 flex gap-px">
        <Task label="Edge">
          <svg viewBox="0 0 22 22" className="size-[22px]" fill="none"><path d="M2 11C4 3 19 0 20 12H7c0 8 8 7 12 5M7 11c1-6 8-5 8-1" stroke="#0f7bdc" strokeWidth="3.500" /></svg>
        </Task>
        <Task label="商店">
          <svg viewBox="0 0 22 24" className="h-6 w-[22px]" fill="none"><path d="M7 7c0-7 7-7 7 0M10 5c2-5 6-2 6 2" stroke="#fff" /><path d="m1 7 20-1v16L2 21z" fill="#fff" /><path d="m6 10 4-.5v4.200H6zm5-.6 5-.4v4.700h-5zM6 14.500h4V19l-4-.5zm5 0h5v5l-5-.5z" fill="#020b0e" /></svg>
        </Task>
        <Task label="文件资源管理器">
          <svg viewBox="0 0 22 20" className="h-5 w-[22px]"><path d="M0 1h8l1 2h13v16H0z" fill="#f9dd86" /><path d="M0 4.500h9l1-1.500" stroke="#e0b74d" fill="none" /><path d="M4 11h14v8h-4v-4H8v4H4z" fill="#3ea6e6" /></svg>
        </Task>
        <Task run label="浏览器">
          <svg viewBox="0 0 24 24" className="size-6" fill="none"><path d="M22 3c-2 2-5 2-7 2C8 5 5 9 6 14" stroke="#4cb8e8" strokeWidth="5" /><path d="M3 14c2 5 7 8 12 6" stroke="#ec6b7b" strokeWidth="5" /><path d="M12 12h7c2 4 0 7-4 8" stroke="#2a7cc4" strokeWidth="3.500" /></svg>
        </Task>
        <Task run active label="广联达">
          <svg viewBox="0 0 24 24" className="size-6" fill="none"><rect width="24" height="24" rx="4" fill="#0f8ff0" /><path d="M12 18V8c0-3 3-4 5-2M4 12h15M4 12c1 6 12 7 15 1" stroke="#fff" strokeWidth="2" /></svg>
        </Task>
        <Task run label="画图">
          <svg viewBox="0 0 24 24" className="size-6" fill="none"><rect width="24" height="24" rx="2" fill="#f09a1c" /><path d="M3 5h15l-2 15H6z" fill="#fff" /><path d="M7 9h7M7 12h6M8 15h4" stroke="#a57a44" strokeWidth="1.500" /><path d="m20 2-8 13-1 3 2.500-2L22 4z" fill="#c8401c" /></svg>
        </Task>
        <Task run label="360浏览器">
          <svg viewBox="0 0 22 24" className="h-6 w-[22px]" fill="none"><circle cx="11" cy="12" r="9.500" fill="#4db82c" stroke="#e8f7df" /><path d="M6 12h10c0-7-10-6-10 1 0 6 7 6 10 3" stroke="#fff" strokeWidth="2.500" /><path d="M2 22C-1 15 11 2 21 1" stroke="#3ba020" strokeWidth="1.500" /></svg>
        </Task>
      </div>
      <span className="flex-1" />
      <div className="pb-0.5 text-center leading-[17px]"><div>41%</div><div>CPU使用</div></div>
      <svg viewBox="0 0 12 7" className="ml-5 h-[7px] w-3" fill="none" stroke="#fff" strokeWidth="1.300"><path d="m.5 6.500 5.500-5.500 5.500 5.500" /></svg>
      <svg viewBox="0 0 16 12" className="ml-2.5 h-3 w-4" fill="none" stroke="#fff"><path d="M4.500 3.500h10v7h-9v-3M15.500 5.500v3M1.500 0v3M3.500 0v3M.5 3.500h4v2l-1 1h-2l-1-1zM2.500 6v4" /><path d="M7 5h6v4H7z" fill="#fff" /></svg>
      <svg viewBox="0 0 14 14" className="ml-2.5 size-3.5" fill="none" stroke="#ccc" strokeWidth="1.300"><path d="M1 13A12 12 0 0 1 13 1M4.500 13A8.500 8.500 0 0 1 13 4.500M8 13a5 5 0 0 1 5-5" /><circle cx="12" cy="12" r="1.500" fill="#fff" /></svg>
      <svg viewBox="0 0 16 14" className="ml-2 h-3.5 w-4" fill="none" stroke="#fff"><path d="M.5 4.500H3l4-3.500v12L3 9.500H.5zM9.500 5c1 1 1 3 0 4M11.500 3c2 2 2 6 0 8M13.500 1c3 3 3 9 0 12" /></svg>
      <span className="ml-2 text-sm">中</span>
      <SogouMark className="ml-3.5 size-4" />
      <div className="ml-4 text-center leading-[19px]"><div>14:06</div><div>2017/8/10</div></div>
      <div className="relative mr-2.5 ml-[18px] h-7 w-7">
        <svg viewBox="0 0 16 16" className="mt-1 size-4" fill="#fff"><path d="M0 0h16v12H6l-3 3v-3H0z" /><path d="M3 3.500h10M3 6.500h10M3 9.500h7" stroke="#020b0e" /></svg>
        <span className="absolute right-0.5 bottom-0 flex h-[17px] w-[21px] items-center justify-center rounded-full border border-[#777] bg-[#333] text-xs leading-4">13</span>
      </div>
      <span className="mr-1 h-10 w-px bg-[#444]" />
    </div>
  );
}

export default function App() {
  return (
    <div className={`${UI} relative flex h-screen flex-col overflow-hidden bg-[#f0f0f0] text-black`}>
      <TitleBar />
      <MenuBar />
      <MainToolbar />
      <main className="flex min-h-0 flex-1">
        <NavPanel />
        <div className="ml-[5px] flex min-w-0 flex-1 flex-col">
          <EditToolbar />
          <div className="flex min-h-0 flex-1">
            <div className="flex pt-1"><PartList /></div>
            <PropertyPane />
          </div>
        </div>
      </main>
      <StatusBar />
      <Taskbar />
      <ImeBar />
      <svg viewBox="0 0 424 50" className="pointer-events-none absolute top-[243px] left-[373px] h-[50px] w-[424px]" fill="none" stroke="#f00" strokeWidth="3" aria-hidden="true">
        <ellipse cx="212" cy="25" rx="210" ry="23" />
      </svg>
      <svg viewBox="0 0 828 86" className="pointer-events-none absolute bottom-3.5 left-[325px] h-[86px] w-[828px]" fill="none" stroke="#f00" strokeWidth="3" aria-hidden="true">
        <ellipse cx="414" cy="43" rx="412" ry="41" />
      </svg>
    </div>
  );
}
